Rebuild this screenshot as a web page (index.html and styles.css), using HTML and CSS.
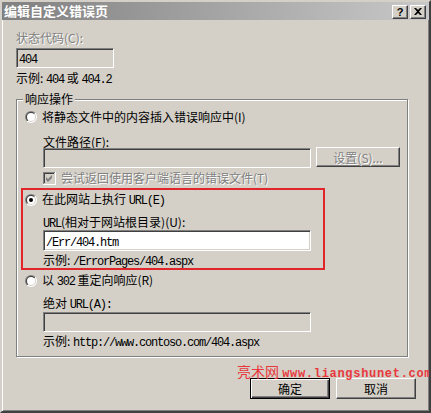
FILE: index.html
```html
<!DOCTYPE html>
<html>
<head>
<meta charset="utf-8">
<title>编辑自定义错误页</title>
<link rel="stylesheet" href="styles.css">
</head>
<body>
<div class="window">
  <div class="titlebar">
    <span class="title">编辑自定义错误页</span>
    <div class="tbtns">
      <span class="tbtn">?</span>
      <span class="tbtn"><svg width="8" height="7" viewBox="0 0 8 7"><path d="M0 0h2l2 2 2-2h2L5 3.5 8 7H6L4 5 2 7H0l3-3.5z" fill="#000"/></svg></span>
    </div>
  </div>
  <div class="content">
    <div class="line dis lbl-status">状态代码(C):</div>
    <div class="tb tb-status"><span class="m">404</span></div>
    <div class="line ex1">示例: <span class="m">404</span> 或 <span class="m">404.2</span></div>

    <div class="group">
      <div class="legend">响应操作</div>

      <div class="line radio-row r1">
        <svg class="radio" width="12" height="12" viewBox="0 0 12 12">
          <defs>
            <linearGradient id="ro" x1="0" y1="0" x2="1" y2="1"><stop offset=".5" stop-color="#808080"/><stop offset=".5" stop-color="#ffffff"/></linearGradient>
            <linearGradient id="ri" x1="0" y1="0" x2="1" y2="1"><stop offset=".5" stop-color="#404040"/><stop offset=".5" stop-color="#d4d0c8"/></linearGradient>
          </defs>
          <circle cx="6" cy="6" r="6" fill="url(#ro)"/>
          <circle cx="6" cy="6" r="5" fill="url(#ri)"/>
          <circle cx="6" cy="6" r="4" fill="#fff"/>
        </svg>
        <span>将静态文件中的内容插入错误响应中(I)</span>
      </div>
      <div class="line sub l-file">文件路径(F):</div>
      <div class="file-row">
        <div class="tb tb-file"></div>
        <div class="btn btn-set dis">设置(S)...</div>
      </div>
      <div class="line check-row">
        <svg class="check" width="13" height="13" viewBox="0 0 13 13">
          <rect x="0" y="0" width="13" height="13" fill="#ffffff"/>
          <rect x="0" y="0" width="12" height="12" fill="#808080"/>
          <rect x="1" y="1" width="11" height="11" fill="#d4d0c8"/>
          <rect x="1" y="1" width="10" height="10" fill="#404040"/>
          <rect x="2" y="2" width="9" height="9" fill="#d4d0c8"/>
          <path d="M3 5L5 7L9 3V6L5 10L3 8Z" fill="#808080"/>
        </svg>
        <span class="dis">尝试返回使用客户端语言的错误文件(T)</span>
      </div>

      <div class="redbox">
        <div class="line radio-row r2">
          <svg class="radio" width="12" height="12" viewBox="0 0 12 12">
            <circle cx="6" cy="6" r="6" fill="url(#ro)"/>
            <circle cx="6" cy="6" r="5" fill="url(#ri)"/>
            <circle cx="6" cy="6" r="4" fill="#fff"/>
            <circle cx="6" cy="6" r="2" fill="#000"/>
          </svg>
          <span>在此网站上执行 <span class="m">URL(E)</span></span>
        </div>
        <div class="line sub l-url"><span class="m">URL</span>(相对于网站根目录)(U):</div>
        <div class="tb tb-url"><span class="m">/Err/404.htm</span></div>
        <div class="line sub ex2">示例: <span class="m">/ErrorPages/404.aspx</span></div>
      </div>

      <div class="line radio-row r3">
        <svg class="radio" width="12" height="12" viewBox="0 0 12 12">
          <circle cx="6" cy="6" r="6" fill="url(#ro)"/>
          <circle cx="6" cy="6" r="5" fill="url(#ri)"/>
          <circle cx="6" cy="6" r="4" fill="#fff"/>
        </svg>
        <span>以 <span class="m">302</span> 重定向响应(R)</span>
      </div>
      <div class="line sub l-abs">绝对 <span class="m">URL(A):</span></div>
      <div class="tb tb-abs"></div>
      <div class="line sub ex3">示例: <span class="m">http://www.contoso.com/404.aspx</span></div>
    </div>

    <div class="footer">
      <div class="btn btn-default">确定</div>
      <div class="btn">取消</div>
    </div>
  </div>
  <div class="watermark">亮术网 <span class="wm-url">www.liangshunet.com</span></div>
</div>
</body>
</html>
```

FILE: styles.css
```css
* { box-sizing: border-box; }
html, body { margin: 0; padding: 0; background: #d4d0c8; }
body {
  font-family: "Noto Sans CJK SC", "Liberation Sans", sans-serif;
  font-size: 12px;
  color: #000;
}
.window {
  position: relative;
  width: 431px;
  height: 413px;
  background: #d4d0c8;
  border-style: solid;
  border-width: 2px;
  border-color: #d4d0c8 #404040 #404040 #d4d0c8;
  box-shadow: inset 1px 1px 0 #fff, inset -1px -1px 0 #808080;
  overflow: hidden;
}
.titlebar {
  height: 18px;
  display: flex;
  align-items: center;
  justify-content: space-between;
  padding: 0 3px 0 2px;
  background: linear-gradient(to right, #808080, #c8c8c8);
}
.title {
  color: #fff;
  font-weight: bold;
  font-size: 13px;
  line-height: 18px;
}
.tbtns { display: flex; gap: 2px; margin-top: 1px; }
.tbtn {
  width: 16px;
  height: 14px;
  display: flex;
  align-items: center;
  justify-content: center;
  background: #d4d0c8;
  border: 1px solid;
  border-color: #fff #404040 #404040 #fff;
  box-shadow: inset -1px -1px 0 #808080;
  font-family: "Liberation Sans", sans-serif;
  font-weight: bold;
  font-size: 11px;
  line-height: 12px;
}
.content {
  padding-left: 14px;
  display: flex;
  flex-direction: column;
}
.line {
  height: 14px;
  line-height: 14px;
  white-space: nowrap;
}
.m {
  font-family: "Liberation Mono", monospace;
  font-size: 12px;
  letter-spacing: -1.2px;
}
.dis { color: #808080; text-shadow: 1px 1px 0 #fff; }
.lbl-status { margin-top: 10px; height: 16px; line-height: 16px; }
.tb {
  height: 20px;
  background: #d4d0c8;
  border: 1px solid;
  border-color: #808080 #fff #fff #808080;
  box-shadow: inset 1px 1px 0 #404040, inset -1px -1px 0 #d4d0c8;
  padding-left: 2px;
  line-height: 18px;
  flex: none;
}
.tb-status { margin-top: 2px; width: 98px; }
.ex1 { margin-top: 3px; }

.group {
  margin-top: 14px;
  width: 392px;
  border: 1px solid #808080;
  box-shadow: inset 1px 1px 0 #fff, 1px 1px 0 #fff;
  display: flex;
  flex-direction: column;
  padding-bottom: 8px;
}
.legend {
  align-self: flex-start;
  margin-top: -8px;
  margin-left: 6px;
  padding: 0 2px;
  height: 14px;
  line-height: 14px;
  background: #d4d0c8;
}
.radio-row {
  display: flex;
  align-items: center;
  gap: 5px;
  padding-left: 8px;
}
.radio { flex: none; }
.r1 { margin-top: 4px; }
.sub { padding-left: 26px; }
.l-file { margin-top: 11px; }
.file-row {
  margin-top: -2px;
  display: flex;
  align-items: flex-start;
  gap: 5px;
  padding-left: 26px;
}
.tb-file { margin-top: 1px; width: 268px; }
.btn {
  width: 80px;
  height: 21px;
  display: flex;
  align-items: center;
  justify-content: center;
  background: #d4d0c8;
  border: 1px solid;
  border-color: #fff #404040 #404040 #fff;
  box-shadow: inset -1px -1px 0 #808080;
  line-height: 19px;
}
.btn-set { width: 84px; height: 20px; }
.check-row {
  margin-top: 3px;
  display: flex;
  align-items: center;
  gap: 5px;
  padding-left: 26px;
}
.check { flex: none; }

.redbox {
  margin-top: 3px;
  margin-left: 4px;
  width: 304px;
  border: 2px solid #e0262a;
  padding-bottom: 1px;
  display: flex;
  flex-direction: column;
}
.redbox .radio-row { padding-left: 2px; }
.redbox .sub { padding-left: 20px; }
.r2 { margin-top: 3px; }
.l-url { margin-top: 8px; }
.tb-url {
  margin-top: 1px;
  margin-left: 20px;
  width: 268px;
  height: 21px;
  background: #fff;
  line-height: 19px;
}
.ex2 { margin-top: 2px; }
.r3 { margin-top: 4px; }
.l-abs { margin-top: 8px; }
.tb-abs { margin-top: 2px; margin-left: 26px; width: 268px; }
.ex3 { margin-top: 2px; }

.footer {
  margin-top: 21px;
  display: flex;
  justify-content: flex-end;
  gap: 6px;
  padding-right: 13px;
}
.btn-default {
  border: 1px solid #000;
  box-shadow: inset 1px 1px 0 #fff, inset -1px -1px 0 #404040, inset -2px -2px 0 #808080;
}
.watermark {
  position: absolute;
  left: 235px;
  top: 361px;
  color: #e8383c;
  font-size: 14px;
  line-height: 16px;
  white-space: nowrap;
}
.wm-url {
  font-family: "Liberation Mono", monospace;
  font-size: 12px;
  font-weight: bold;
  letter-spacing: 0.7px;
}
```
